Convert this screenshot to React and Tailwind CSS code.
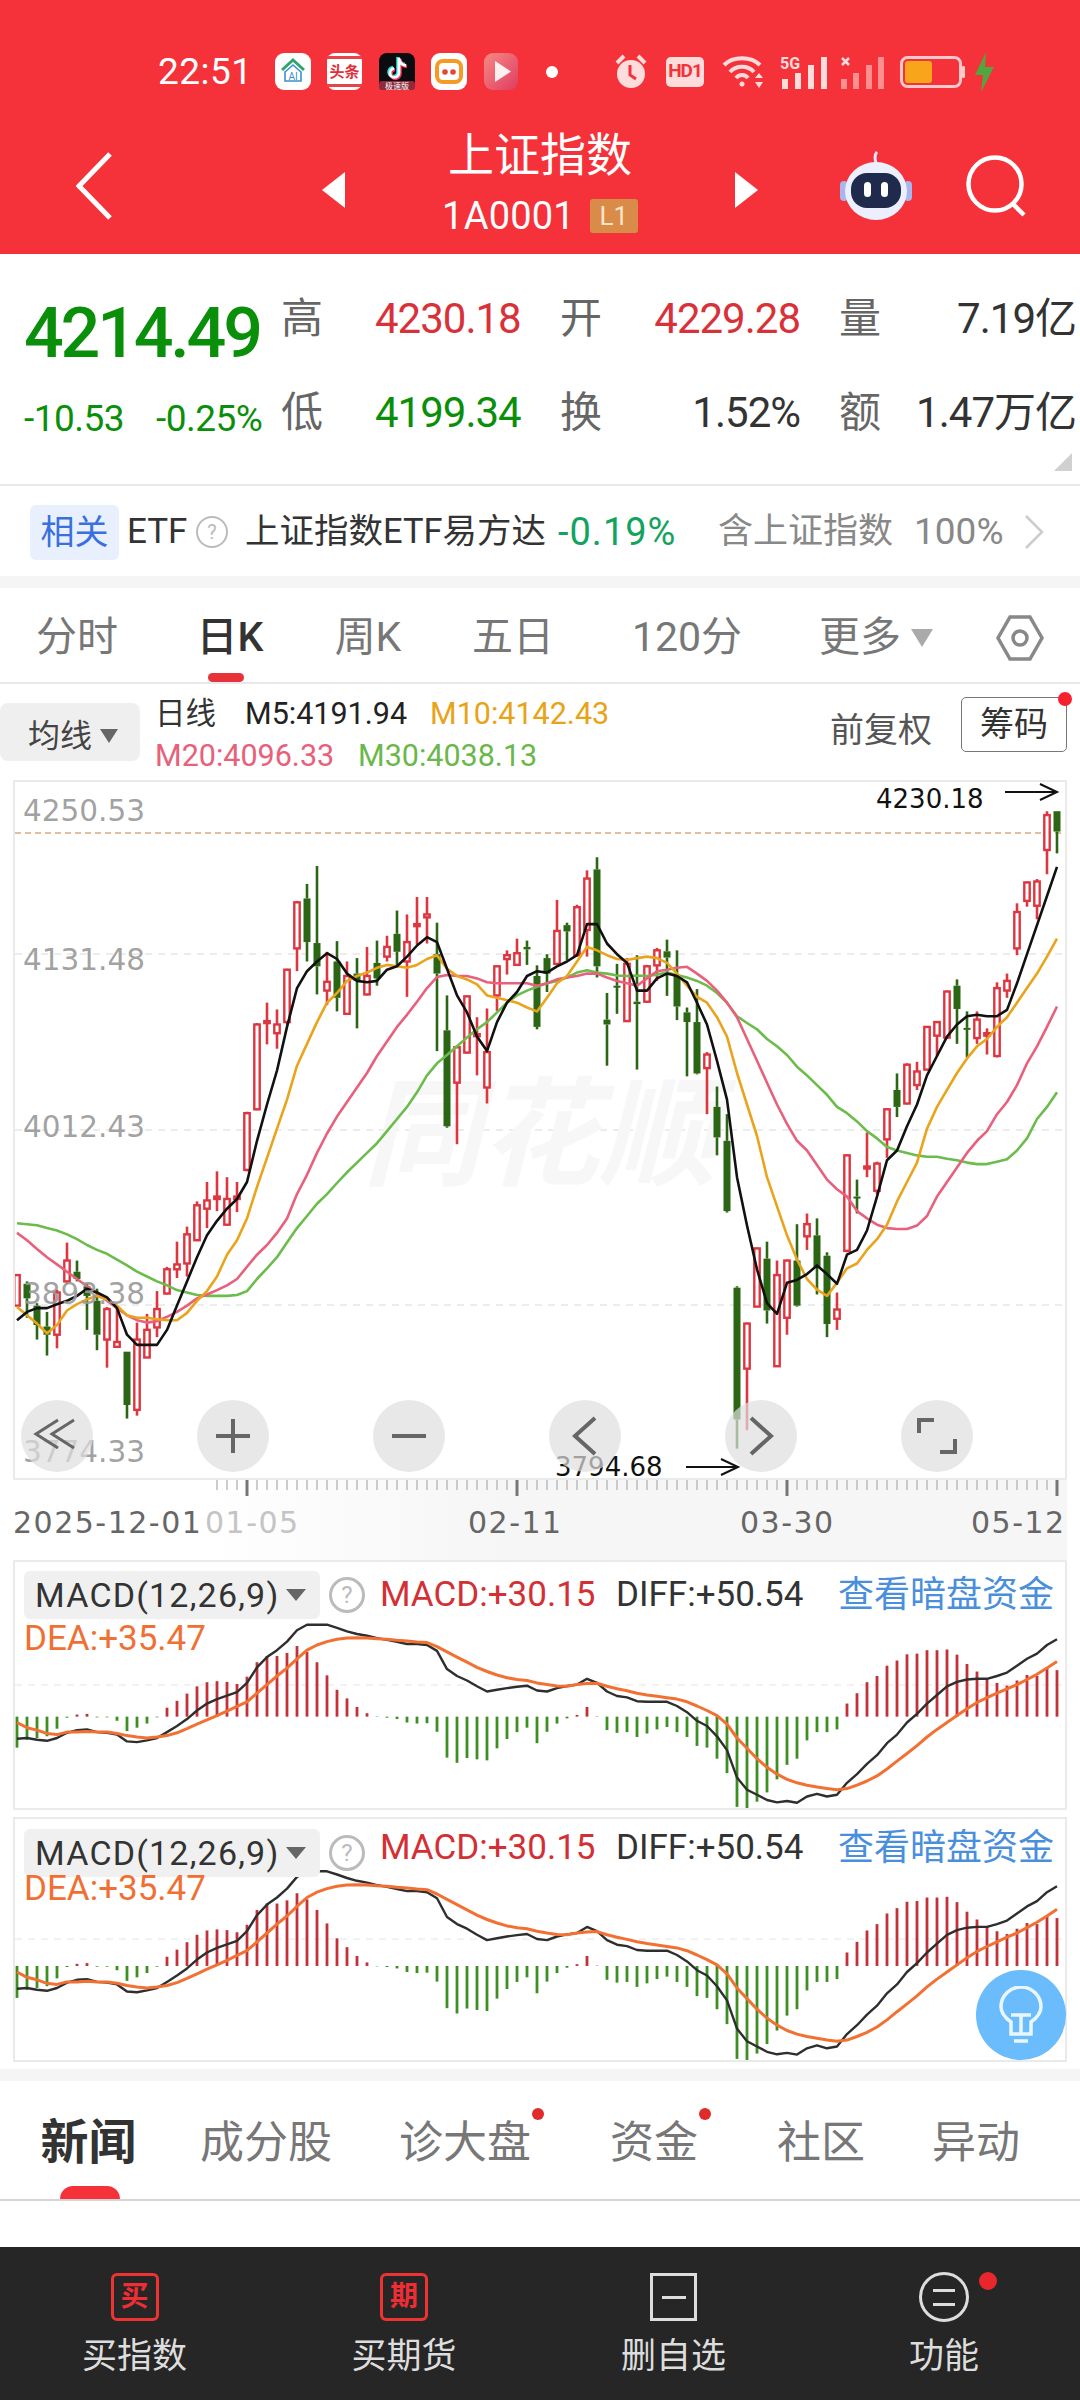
import React from "react";

// candles: [high, bodyTop, bodyBottom, low, isRed], read off the chart at 10px per bar
const candles = [
  [1042,1042,1105,1105,1],[1055,1060,1090,1130,0],[1100,1105,1145,1175,0],[1118,1148,1165,1208,0],[1072,1078,1165,1193,1],
  [975,1012,1055,1060,1],[1012,1035,1050,1055,0],[1060,1065,1085,1155,0],[1070,1095,1165,1197,0],[1108,1112,1175,1233,1],
  [1105,1180,1190,1192,1],[1200,1200,1310,1338,0],[1140,1175,1320,1332,1],[1122,1155,1212,1212,1],[1075,1112,1150,1170,1],
  [1025,1030,1080,1082,1],[973,1020,1030,1048,1],[942,958,1018,1045,1],[890,898,970,972,1],[850,888,905,945,1],
  [828,880,885,910,1],[840,885,938,940,1],[850,880,885,912,1],[705,708,825,828,1],[522,525,700,702,1],
  [480,518,522,566,1],[494,525,543,575,1],[410,412,520,525,1],[270,273,368,415,1],[235,265,355,395,0],
  [198,357,405,463,0],[375,437,455,485,1],[353,395,470,498,0],[395,425,503,505,1],[388,420,435,533,0],
  [365,425,463,465,1],[352,398,430,445,0],[342,365,385,395,1],[290,338,375,405,0],[298,355,395,468,1],
  [262,318,322,360,1],[262,298,304,358,1],[315,380,420,580,0],[465,537,735,738,0],[568,572,645,772,1],
  [465,467,583,585,1],[510,545,548,630,1],[492,582,655,688,1],[403,405,465,497,1],[372,382,390,422,1],
  [348,378,402,404,1],[352,365,370,402,0],[403,425,530,535,0],[380,388,420,458,0],[268,332,400,402,1],
  [315,320,333,392,0],[278,283,382,385,1],[207,224,330,385,1],[180,205,405,428,0],[460,515,525,610,0],
  [400,445,448,503,0],[388,400,518,520,1],[382,478,483,618,0],[402,405,478,480,1],[367,372,403,435,1],
  [350,374,387,466,0],[372,425,488,516,0],[490,500,520,632,0],[452,520,626,628,0],[582,587,615,710,1],
  [653,695,758,795,0],[710,765,910,913,0],[1065,1068,1340,1400,0],[1140,1142,1235,1362,1],[985,987,1107,1108,1],
  [973,1008,1115,1142,0],[1012,1042,1230,1230,1],[1010,1012,1130,1165,1],[937,1012,1105,1107,0],[915,937,962,990,1],
  [925,960,1025,1082,0],[995,1002,1143,1170,0],[1078,1113,1132,1155,1],[793,795,992,995,1],[845,880,883,915,0],
  [748,818,822,840,1],[808,812,868,875,1],[698,700,762,800,1],[626,660,695,716,0],[605,608,688,690,1],
  [602,622,650,660,1],[528,530,618,620,1],[518,520,548,590,1],[455,457,552,555,1],[432,445,493,565,0],
  [498,532,535,593,0],[498,515,553,565,1],[533,543,548,587,1],[438,450,590,593,1],[420,435,455,470,1],
  [275,293,368,382,1],[230,232,270,282,1],[225,230,280,308,1],[85,93,165,215,1],[85,85,127,172,0],
];

const ma5 = [1135,1118,1110,1110,1102,1095,1085,1070,1078,1088,1110,1165,1186,1186,1186,1155,1105,1055,1005,960,930,905,885,850,765,690,620,530,450,415,395,378,390,420,435,438,435,412,405,385,362,345,355,410,465,500,550,580,520,480,458,425,415,418,405,395,382,318,318,358,380,398,455,455,430,420,425,438,480,525,600,680,840,940,1030,1100,1122,1058,1052,1040,1022,1040,1060,1000,990,950,880,805,785,735,690,630,590,550,525,508,505,508,508,495,440,380,320,260,200];
const ma10 = [1108,1125,1142,1162,1145,1115,1102,1092,1085,1092,1105,1125,1130,1130,1133,1135,1135,1120,1095,1075,1045,1000,970,925,860,800,740,680,610,565,520,480,460,435,425,418,408,402,405,408,402,390,382,410,425,432,442,465,470,475,480,490,498,470,440,425,395,365,372,382,390,392,388,385,388,398,420,445,468,480,510,550,625,690,755,840,900,960,1010,1050,1072,1085,1058,1028,1018,990,968,938,890,850,810,740,695,660,625,595,570,555,530,510,480,450,420,385,348];
const ma20 = [955,970,988,1005,1020,1035,1050,1065,1080,1095,1110,1125,1135,1140,1137,1128,1118,1105,1090,1082,1073,1063,1050,1025,1000,980,955,925,875,835,790,750,715,685,655,625,590,560,530,505,478,450,427,423,425,425,430,438,440,440,440,440,445,440,432,428,425,420,420,428,435,440,445,430,415,412,408,406,420,435,455,480,510,555,600,645,690,730,765,785,815,845,865,880,910,925,938,945,947,947,940,920,880,850,820,790,765,745,710,685,650,605,570,530,488];
const ma30 = [935,937,939,945,950,958,968,980,990,998,1010,1022,1035,1045,1055,1063,1073,1078,1083,1085,1085,1085,1083,1075,1050,1028,1005,975,945,920,895,875,852,830,810,790,770,745,720,695,665,630,605,588,570,552,535,520,500,480,465,455,447,440,435,428,418,413,418,420,424,425,424,425,422,418,423,428,435,445,460,480,508,522,535,555,570,588,612,630,650,670,695,708,725,745,760,778,785,790,795,798,798,802,805,810,813,813,808,803,785,760,720,695,665];

const hist = [603,580,575,570,548,516,507,505,515,515,525,555,545,533,515,487,467,446,425,413,410,412,418,397,355,337,337,328,308,325,355,393,435,460,485,503,514,516,520,530,533,532,557,632,647,633,637,640,605,578,558,545,590,557,533,518,508,485,512,552,560,558,572,562,550,543,558,572,598,603,635,677,775,783,760,733,695,653,635,582,558,558,550,475,445,413,395,365,350,332,330,320,320,318,333,360,382,403,415,423,408,392,395,372,378];
const diff = [577,575,580,583,575,560,552,550,558,560,565,585,587,582,575,558,540,520,495,475,462,452,442,415,370,340,320,295,262,246,246,246,255,265,273,278,285,290,296,302,302,305,322,375,395,408,425,440,435,430,426,423,437,440,430,424,420,403,415,440,453,457,468,470,470,470,482,500,525,540,570,610,690,725,740,755,762,758,763,745,737,745,740,705,680,650,625,590,565,530,505,475,450,425,412,405,403,403,395,385,365,345,330,305,288];
const dea = [530,545,552,562,565,558,558,556,558,558,562,568,572,575,572,568,560,548,535,522,510,497,483,470,445,420,395,372,345,320,305,295,288,285,284,285,287,288,291,293,296,298,310,325,340,355,370,382,392,400,405,408,415,420,424,425,420,417,416,425,432,438,445,450,454,458,462,470,482,495,510,535,575,605,635,660,680,695,705,712,717,722,725,722,712,700,685,665,642,620,597,572,550,530,510,490,472,458,445,432,420,405,390,372,353];

const barX = (i) => 17 + 10 * i;
const kY = (z) => 770 + z / 2.063;
const line = (arr, toY) => arr.map((z, i) => `${barX(i)},${toY(z).toFixed(1)}`).join(" ");
const dejavu = "'DejaVu Sans', sans-serif";

function KChart() {
  return (
    <svg className="block" width="1050" height="696" viewBox="15 782 1050 696">
      {[954, 1130, 1305].map((y) => (
        <line key={y} x1="15" x2="1065" y1={y} y2={y} stroke="#e6e6e6" strokeWidth="1.5" strokeDasharray="7 6" />
      ))}
      <line x1="15" x2="1065" y1="833" y2="833" stroke="#d9a97c" strokeWidth="1.5" strokeDasharray="6 4" />
      <text x="540" y="1176" textAnchor="middle" fontSize="118" fontStyle="italic" fontWeight="700" fill="#f7f7f7" fontFamily="'Noto Sans CJK SC', sans-serif">同花顺</text>
      {candles.map(([hi, top, bot, lo, red], i) => {
        const x = barX(i);
        const color = red ? "#dd3640" : "#2b6614";
        return (
          <g key={i}>
            <line x1={x} x2={x} y1={kY(hi)} y2={kY(top)} stroke={color} strokeWidth="2.6" />
            <line x1={x} x2={x} y1={kY(bot)} y2={kY(lo)} stroke={color} strokeWidth="2.6" />
            {red ? (
              <rect x={x - 2.7} y={kY(top)} width="5.4" height={Math.max(kY(bot) - kY(top), 2)} fill="#fff" stroke={color} strokeWidth="2.4" />
            ) : (
              <rect x={x - 3.5} y={kY(top)} width="7" height={Math.max(kY(bot) - kY(top), 2)} fill={color} />
            )}
          </g>
        );
      })}
      <polyline points={line(ma30, kY)} fill="none" stroke="#6cbc4c" strokeWidth="2.6" strokeLinejoin="round" />
      <polyline points={line(ma20, kY)} fill="none" stroke="#e9607c" strokeWidth="2.6" strokeLinejoin="round" />
      <polyline points={line(ma10, kY)} fill="none" stroke="#e9a41c" strokeWidth="2.6" strokeLinejoin="round" />
      <polyline points={line(ma5, kY)} fill="none" stroke="#111" strokeWidth="2.6" strokeLinejoin="round" />
      <g fontFamily={dejavu} fontSize="29.5" fill="#999" fillOpacity="0.92">
        <text x="23" y="821">4250.53</text>
        <text x="23" y="970">4131.48</text>
        <text x="23" y="1137">4012.43</text>
        <text x="23" y="1304">3893.38</text>
        <text x="23" y="1462">3774.33</text>
      </g>
      <g fontFamily={dejavu} fontSize="26" fill="#111">
        <text x="876" y="808">4230.18</text>
        <text x="555" y="1476">3794.68</text>
      </g>
      <g fill="none" stroke="#111" strokeWidth="2">
        <path d="M1005 792H1057M1040 784L1057 792L1040 800" />
        <path d="M686 1467H738M721 1459L738 1467L721 1475" />
      </g>
    </svg>
  );
}

function ChartButton({ children }) {
  return (
    <div className="w-[72px] h-[72px] rounded-full bg-[#dedede]/70 shrink-0">
      <svg width="72" height="72" viewBox="0 0 72 72" fill="none" stroke="#666" strokeWidth="4">
        {children}
      </svg>
    </div>
  );
}

function Axis() {
  const ticks = [];
  for (let x = 217; x <= 1057; x += 10) {
    const major = (x - 247) % 270 === 0;
    ticks.push(
      <line key={x} x1={x} x2={x} y1="1480" y2={major ? 1496 : 1490} stroke={major ? "#777" : "#bbb"} strokeWidth={major ? 3 : 1.5} />
    );
  }
  return (
    <svg className="block" width="1080" height="80" viewBox="0 1480 1080 80">
      <defs>
        <linearGradient id="axisfade" x1="0" x2="1" y1="0" y2="0">
          <stop offset="0" stopColor="#f6f6f6" stopOpacity="0" />
          <stop offset="1" stopColor="#f6f6f6" />
        </linearGradient>
      </defs>
      <rect x="200" y="1480" width="300" height="80" fill="url(#axisfade)" />
      <rect x="500" y="1480" width="567" height="80" fill="#f6f6f6" />
      {ticks}
      <g fontFamily={dejavu} fontSize="30" letterSpacing="1.5" fill="#666">
        <text x="205" y="1533" fill="#c4c4c4">01-05</text>
        <text x="13" y="1533">2025-12-01</text>
        <text x="468" y="1533">02-11</text>
        <text x="740" y="1533">03-30</text>
        <text x="971" y="1533">05-12</text>
      </g>
    </svg>
  );
}

function MacdPlot({ scale, zero, grid, width, height, top }) {
  const y = (z) => 1540 + (zero + (z - 513) * scale) / 2.904;
  const base = 1540 + zero / 2.904;
  return (
    <svg className="block" width={width} height={height} viewBox={`15 ${top} ${width} ${height}`}>
      <line x1="15" x2="1065" y1={grid} y2={grid} stroke="#eee" strokeWidth="1.5" strokeDasharray="7 6" />
      {hist.map((z, i) => (
        <line key={i} x1={barX(i)} x2={barX(i)} y1={base} y2={y(z)} stroke={z < 513 ? "#c43038" : "#3d8f22"} strokeWidth="2.8" />
      ))}
      <polyline points={line(diff, y)} fill="none" stroke="#2e2e2e" strokeWidth="2.4" strokeLinejoin="round" />
      <polyline points={line(dea, y)} fill="none" stroke="#f27132" strokeWidth="3" strokeLinejoin="round" />
    </svg>
  );
}

function MacdHeader({ topGap, deaGap, lift }) {
  return (
    <div className="absolute left-0 top-0 w-full" style={{ paddingTop: topGap }}>
      <div className="flex items-center h-[48px] pl-[9px] text-[35px]">
        <div className="w-[296px] h-[48px] flex items-center pl-[11px] bg-[#f0f0f0] rounded-md text-[#333] text-[34px]">
          <span className="w-[245px] tracking-[1.2px]">MACD(12,26,9)</span>
          <span className="ml-[6px] w-0 h-0 border-x-[10px] border-x-transparent border-t-[12px] border-t-[#666]" />
        </div>
        <span className="ml-[9px] w-[36px] h-[36px] rounded-full border-[3px] border-[#bbb] text-[#bbb] text-[24px] leading-[30px] text-center">?</span>
        <div className="flex items-center" style={{ marginTop: lift }}>
          <span className="ml-[15px] text-[#d42f35] w-[236px]">MACD:+30.15</span>
          <span className="text-[#333] w-[222px]">DIFF:+50.54</span>
          <span className="text-[#4a8fdc] text-[36px]">查看暗盘资金</span>
        </div>
      </div>
      <div className="pl-[9px] text-[35px] leading-[40px] text-[#f07033]" style={{ marginTop: deaGap }}>DEA:+35.47</div>
    </div>
  );
}

const quoteRows = [
  ["高", "4230.18", "text-[#d9313a]", "开", "4229.28", "text-[#d9313a]", "量", "7.19亿"],
  ["低", "4199.34", "text-[#0a8f0a]", "换", "1.52%", "text-[#333]", "额", "1.47万亿"],
];

function StatusBar() {
  return (
    <div className="flex items-center h-[37px] mt-[53px] pl-[158px]">
      <span className="w-[117px] text-[37px] leading-none text-white tracking-[0.5px]">22:51</span>
      <svg width="36" height="37" viewBox="0 0 36 37">
        <rect width="36" height="37" rx="9" fill="#fff" />
        <path d="M7 17L18 7L29 17" fill="none" stroke="#2fa56b" strokeWidth="3" />
        <path d="M10 19L18 12L26 19V28H10Z" fill="none" stroke="#3b8fd0" strokeWidth="1.6" />
        <text x="18" y="27" textAnchor="middle" fontSize="10" fill="#3b8fd0" fontFamily="Roboto">AI</text>
      </svg>
      <svg className="ml-[16px]" width="35" height="37" viewBox="0 0 35 37">
        <rect width="35" height="37" rx="8" fill="#fff" />
        <rect width="35" height="3" y="3" fill="#e8434a" />
        <rect width="35" height="3" y="31" fill="#e8434a" />
        <text x="17.5" y="24" textAnchor="middle" fontSize="15" fontWeight="700" fill="#e0303a" fontFamily="'Noto Sans CJK SC'">头条</text>
      </svg>
      <svg className="ml-[17px]" width="36" height="37" viewBox="0 0 36 37">
        <rect width="36" height="37" rx="8" fill="#0b0b10" />
        <path d="M20 5V20A4.5 4.5 0 1 1 15 15.5M20 6C21 10 23 12 27 12.500" fill="none" stroke="#2ee6e6" strokeWidth="3.500" transform="translate(-1 -1)" />
        <path d="M20 5V20A4.5 4.5 0 1 1 15 15.5M20 6C21 10 23 12 27 12.500" fill="none" stroke="#f4355a" strokeWidth="3.500" transform="translate(1 1)" />
        <path d="M20 5V20A4.5 4.5 0 1 1 15 15.5M20 6C21 10 23 12 27 12.500" fill="none" stroke="#fff" strokeWidth="2.800" />
        <rect y="28" width="36" height="9" rx="3" fill="#8e2a3c" />
        <text x="18" y="36" textAnchor="middle" fontSize="8" fill="#fff" fontFamily="'Noto Sans CJK SC'">极速版</text>
      </svg>
      <svg className="ml-[16px]" width="36" height="37" viewBox="0 0 36 37">
        <rect width="36" height="37" rx="9" fill="#fff" />
        <rect x="6" y="8" width="24" height="21" rx="6" fill="none" stroke="#f59a23" strokeWidth="4" />
        <circle cx="14" cy="19" r="2.800" fill="#e0483a" />
        <circle cx="22" cy="19" r="2.800" fill="#e0483a" />
      </svg>
      <svg className="ml-[17px]" width="34" height="37" viewBox="0 0 34 37">
        <defs>
          <linearGradient id="playbg" x1="0" x2="1" y1="0" y2="1">
            <stop offset="0" stopColor="#f58a82" />
            <stop offset="1" stopColor="#e13b62" />
          </linearGradient>
        </defs>
        <rect width="34" height="37" rx="9" fill="url(#playbg)" />
        <path d="M11 8L27 18.500L11 29Z" fill="#fff" fillOpacity="0.9" />
      </svg>
      <span className="ml-[28px] w-[12px] h-[12px] rounded-full bg-white" />
      <svg className="ml-[57px]" width="32" height="37" viewBox="0 0 32 37">
        <circle cx="16" cy="21" r="14" fill="#ffdcdc" />
        <path d="M2 10L9 3M30 10L23 3" stroke="#ffdcdc" strokeWidth="4" />
        <path d="M15 12V22L21 26" fill="none" stroke="#f53239" strokeWidth="3" />
      </svg>
      <div className="ml-[19px] w-[38px] h-[30px] rounded-[5px] bg-[#ffdcdc] flex items-center justify-center text-[#f53239] text-[19px] font-bold tracking-[-1px]">HD1</div>
      <svg className="ml-[18px]" width="43" height="33" viewBox="0 0 43 33" fill="none" stroke="#ffdcdc" strokeWidth="4">
        <path d="M2 10C11 1 29 1 38 10" />
        <path d="M8 17C14 10 26 10 32 17" />
        <path d="M14 23C17 19 23 19 26 23" />
        <circle cx="20" cy="29" r="2.500" fill="#ffdcdc" stroke="none" />
        <path d="M37 18L41 23H33ZM37 33L41 27H33Z" fill="#ffdcdc" stroke="none" />
      </svg>
      <svg className="ml-[15px]" width="48" height="34" viewBox="0 0 48 34">
        <text x="0" y="14" fontSize="16" fontWeight="700" fill="#ffdcdc" fontFamily="Roboto">5G</text>
        <rect x="2" y="24" width="6" height="10" fill="#ffdcdc" />
        <rect x="15" y="18" width="6" height="16" fill="#ffdcdc" />
        <rect x="28" y="10" width="6" height="24" fill="#ffdcdc" />
        <rect x="41" y="2" width="6" height="32" fill="#ffdcdc" />
      </svg>
      <svg className="ml-[12px]" width="45" height="34" viewBox="0 0 45 34">
        <path d="M2 3L9 10M9 3L2 10" stroke="#ffdcdc" strokeWidth="2.500" />
        <rect x="1" y="24" width="6" height="10" fill="#ff8f8f" />
        <rect x="13" y="18" width="6" height="16" fill="#ff8f8f" />
        <rect x="26" y="10" width="6" height="24" fill="#ff8f8f" />
        <rect x="38" y="2" width="6" height="32" fill="#ff8f8f" />
      </svg>
      <svg className="ml-[15px]" width="66" height="32" viewBox="0 0 66 32">
        <rect x="1.500" y="1.500" width="59" height="29" rx="6" fill="none" stroke="#ffc9c9" strokeWidth="3" />
        <rect x="5" y="5" width="27" height="22" rx="3" fill="#f9a51c" />
        <rect x="62" y="10" width="3" height="12" rx="1" fill="#ffc9c9" />
      </svg>
      <svg className="ml-[8px]" width="21" height="40" viewBox="0 0 21 40">
        <path d="M12 0L1 23H9L7 40L20 15H11Z" fill="#52a63f" />
      </svg>
    </div>
  );
}

function NavBar() {
  return (
    <div className="flex items-center mt-[39px] h-[113px]">
      <svg className="ml-[76px] shrink-0" width="36" height="68" viewBox="0 0 36 68" fill="none" stroke="#fff" strokeWidth="5">
        <path d="M34 2L3 34L34 66" />
      </svg>
      <svg className="ml-[210px] shrink-0 mt-[8px]" width="23" height="36" viewBox="0 0 23 36">
        <path d="M23 0V36L0 18Z" fill="#fff" />
      </svg>
      <div className="w-[390px] flex flex-col items-center text-white pb-[5px]">
        <div className="text-[46px] leading-[50px]">上证指数</div>
        <div className="flex items-center mt-[16px] h-[40px]">
          <span className="text-[38px] leading-none tracking-[0.2px]">1A0001</span>
          <span className="ml-[15px] w-[48px] h-[34px] bg-[#d98c47] rounded-[3px] text-[26px] leading-[34px] text-center text-[#f8e4cd]">L1</span>
        </div>
      </div>
      <svg className="shrink-0 mt-[8px]" width="23" height="36" viewBox="0 0 23 36">
        <path d="M0 0V36L23 18Z" fill="#fff" />
      </svg>
      <svg className="ml-[82px] shrink-0" width="72" height="70" viewBox="0 0 72 70">
        <path d="M36 14C36 9 33 5 37 1" fill="none" stroke="#dfe3fb" strokeWidth="3" />
        <rect x="0" y="30" width="8" height="20" rx="4" fill="#a9b5ec" />
        <rect x="64" y="30" width="8" height="20" rx="4" fill="#a9b5ec" />
        <ellipse cx="36" cy="40" rx="31" ry="29" fill="#eceffd" />
        <rect x="11" y="22" width="50" height="35" rx="16" fill="#1f2a4d" />
        <rect x="24" y="31" width="7" height="15" rx="3.500" fill="#fff" />
        <rect x="41" y="31" width="7" height="15" rx="3.500" fill="#fff" />
      </svg>
      <svg className="ml-[54px] shrink-0" width="62" height="62" viewBox="0 0 62 62" fill="none" stroke="#fff" strokeWidth="4.500">
        <circle cx="29" cy="29" r="26.500" />
        <path d="M46 48L58 60" />
      </svg>
    </div>
  );
}

function Tab({ label, width, active, children }) {
  return (
    <div className={`relative h-full flex items-center justify-center pt-[5px] text-[41px] ${width} ${active ? "text-[#333] font-medium" : "text-[#777]"}`}>
      {label}
      {children}
    </div>
  );
}

function BottomTab({ label, width, active, dot }) {
  return (
    <div className={`relative h-full flex items-center justify-center pt-[6px] shrink-0 ${width} ${active ? "text-[48px] text-[#333] font-bold" : "text-[44px] text-[#777]"}`}>
      <span className="relative">
        {label}
        {dot ? <span className="absolute top-[-2px] right-[-13px] w-[12px] h-[12px] rounded-full bg-[#e02b2b]" /> : null}
      </span>
      {active ? <span className="absolute bottom-0 left-[60px] w-[60px] h-[13px] rounded-t-full bg-[#f53239]" /> : null}
    </div>
  );
}

function BarItem({ label, width, children }) {
  return (
    <div className={`relative flex flex-col items-center h-full pt-[25px] text-[35px] text-[#ddd] ${width}`}>
      <div className="h-[50px] flex items-center justify-center">{children}</div>
      <div className="mt-[13px] leading-[44px]">{label}</div>
    </div>
  );
}

export default function App() {
  return (
    <div className="w-[1080px] h-[2400px] bg-white overflow-hidden font-['Roboto','Noto_Sans_CJK_SC',sans-serif]">
      <div className="h-[254px] bg-[#f53239] overflow-hidden">
        <StatusBar />
        <NavBar />
      </div>

      {/* quote */}
      <div className="relative h-[232px] border-b-2 border-[#e9e9e9] flex pt-[17px]">
        <div className="w-[281px] pl-[24px]">
          <div className="mt-[26px] h-[72px] text-[70px] leading-[72px] font-medium text-[#0a8f0a] tracking-[-3.2px]">4214.49</div>
          <div className="mt-[30px] h-[40px] flex text-[37px] leading-[40px] text-[#0a8f0a] tracking-[-0.5px]">
            <span className="w-[132px]">-10.53</span>
            <span>-0.25%</span>
          </div>
        </div>
        <div className="grid grid-cols-[94px_146px_39px_42px_198px_39px_42px_195px] grid-rows-[94px_94px] items-center">
          {quoteRows.map((r) => (
            <React.Fragment key={r[0]}>
              <span className="text-[42px] text-[#666]">{r[0]}</span>
              <span className={`text-[42px] tracking-[-1px] ${r[2]}`}>{r[1]}</span>
              <span />
              <span className="text-[42px] text-[#666]">{r[3]}</span>
              <span className={`text-[42px] tracking-[-1px] text-right ${r[5]}`}>{r[4]}</span>
              <span />
              <span className="text-[42px] text-[#666]">{r[6]}</span>
              <span className="text-[42px] tracking-[-1px] text-right text-[#333] whitespace-nowrap">{r[7]}</span>
            </React.Fragment>
          ))}
        </div>
        <span className="absolute right-[8px] bottom-[13px] w-0 h-0 border-l-[18px] border-l-transparent border-b-[18px] border-b-[#d0d0d0]" />
      </div>

      {/* related ETF */}
      <div className="h-[90px] flex items-center pl-[30px] whitespace-nowrap pt-[2px]">
        <span className="w-[89px] h-[55px] bg-[#e8f0fd] rounded-md text-[#3b6fe0] text-[34px] leading-[55px] text-center">相关</span>
        <span className="ml-[8px] text-[35px] text-[#333] w-[69px]">ETF</span>
        <span className="w-[32px] h-[32px] rounded-full border-2 border-[#bbb] text-[#bbb] text-[20px] leading-[28px] text-center">?</span>
        <span className="ml-[17px] text-[34.5px] text-[#333] w-[313px]">上证指数ETF易方达</span>
        <span className="text-[38px] tracking-[1px] text-[#12a35f] w-[160px]">-0.19%</span>
        <span className="text-[35px] text-[#888] w-[196px]">含上证指数</span>
        <span className="text-[37px] text-[#888] w-[110px]">100%</span>
        <svg width="20" height="36" viewBox="0 0 20 36" fill="none" stroke="#ccc" strokeWidth="2.500">
          <path d="M2 2L18 18L2 34" />
        </svg>
      </div>
      <div className="h-[12px] bg-[#f5f5f5]" />

      {/* period tabs */}
      <div className="flex h-[96px] border-b-2 border-[#e9e9e9]">
        <Tab label="分时" width="w-[154px]" />
        <Tab label="日K" width="w-[152px]" active>
          <span className="absolute bottom-0 left-[54px] w-[36px] h-[9px] rounded-full bg-[#e8323a]" />
        </Tab>
        <Tab label="周K" width="w-[124px]" />
        <Tab label="五日" width="w-[166px]" />
        <Tab label="120分" width="w-[182px]" />
        <Tab label="更多" width="w-[196px]">
          <span className="ml-[10px] w-0 h-0 border-x-[11px] border-x-transparent border-t-[18px] border-t-[#aaa]" />
        </Tab>
        <div className="w-[92px] flex items-center justify-center pt-[5px]">
          <svg width="48" height="46" viewBox="0 0 48 46" fill="none" stroke="#888" strokeWidth="3.500">
            <path d="M14 2H34L46 23L34 44H14L2 23Z" />
            <circle cx="24" cy="23" r="7" />
          </svg>
        </div>
      </div>

      {/* moving average legend */}
      <div className="relative h-[94px] flex whitespace-nowrap">
        <div className="mt-[19px] w-[140px] h-[58px] bg-[#efefef] rounded-lg flex items-center pl-[28px] pt-[8px] text-[32px] text-[#444]">
          均线
          <span className="ml-[8px] w-0 h-0 border-x-[9px] border-x-transparent border-t-[14px] border-t-[#666]" />
        </div>
        <div className="ml-[15px] pt-[9px] text-[30.5px] leading-[42px]">
          <div className="flex">
            <span className="w-[90px] text-[#333]">日线</span>
            <span className="w-[185px] text-[#222]">M5:4191.94</span>
            <span className="text-[#e8a317]">M10:4142.43</span>
          </div>
          <div className="flex">
            <span className="w-[203px] text-[#e8607a]">M20:4096.33</span>
            <span className="text-[#6ab84b]">M30:4038.13</span>
          </div>
        </div>
        <span className="absolute left-[830px] top-[21px] text-[34px] text-[#555]">前复权</span>
        <div className="absolute left-[961px] top-[13px] w-[106px] h-[55px] border border-[#777] rounded-[5px] text-[34px] leading-[53px] text-center text-[#333]">
          筹码
          <span className="absolute right-[-6px] top-[-6px] w-[14px] h-[14px] rounded-full bg-[#f5222d]" />
        </div>
      </div>

      {/* candle chart */}
      <div className="relative mt-[2px] ml-[13px] w-[1054px] h-[700px] border-2 border-[#eaeaea]">
        <KChart />
        <div className="absolute left-[6px] top-[618px] flex gap-[104px]">
          <ChartButton><path d="M37 20L15 34L37 48M53 20L31 34L53 48" strokeWidth="3" /></ChartButton>
          <ChartButton><path d="M19 36H53M36 19V53" /></ChartButton>
          <ChartButton><path d="M19 36H53" /></ChartButton>
          <ChartButton><path d="M46 18L26 36L46 54" /></ChartButton>
          <ChartButton><path d="M26 18L46 36L26 54" /></ChartButton>
          <ChartButton><path d="M18 33V20H33M54 39V52H39" /></ChartButton>
        </div>
      </div>
      <Axis />

      {/* indicators */}
      <div className="relative ml-[13px] w-[1054px] h-[250px] border-2 border-[#eaeaea]">
        <MacdPlot scale={1} zero={513} grid={1685} width={1050} height={246} top={1562} />
        <MacdHeader topGap={9} deaGap={0} lift={0} />
      </div>
      <div className="relative mt-[7px] ml-[13px] w-[1054px] h-[245px] border-2 border-[#eaeaea]">
        <MacdPlot scale={1.03} zero={1237} grid={1939} width={1050} height={241} top={1819} />
        <MacdHeader topGap={10} deaGap={-8} lift={-10} />
        <div className="absolute right-[-1px] top-[151px] w-[90px] h-[90px] rounded-full bg-[#6bbcfc] flex items-center justify-center">
          <svg width="44" height="58" viewBox="0 0 44 58" fill="none" stroke="#eaf6ff" strokeWidth="3.500">
            <path d="M12 36C5 31 2 26 2 21A20 20 0 0 1 42 21C42 26 39 31 32 36V48H12Z" />
            <path d="M12 29H32M22 29V48M15 55H29" />
          </svg>
        </div>
      </div>
      <div className="mt-[7px] h-[12px] bg-[#f5f5f5]" />

      {/* news tabs */}
      <div className="flex h-[120px] border-b-2 border-[#d4d4d4] whitespace-nowrap">
        <BottomTab label="新闻" width="w-[177px]" active />
        <BottomTab label="成分股" width="w-[178px]" />
        <BottomTab label="诊大盘" width="w-[220px]" dot />
        <BottomTab label="资金" width="w-[158px]" dot />
        <BottomTab label="社区" width="w-[176px]" />
        <BottomTab label="异动" width="w-[134px]" />
      </div>
      <div className="h-[46px]" />

      {/* action bar */}
      <div className="flex h-[153px] bg-[#262626]">
        <BarItem label="买指数" width="w-[269px]">
          <div className="w-[48px] h-[48px] border-[3px] border-[#e33] rounded-md text-[#ee2d35] text-[28px] font-bold leading-[42px] text-center">买</div>
        </BarItem>
        <BarItem label="买期货" width="w-[270px]">
          <div className="w-[48px] h-[48px] border-[3px] border-[#e33] rounded-md text-[#ee2d35] text-[28px] font-bold leading-[42px] text-center">期</div>
        </BarItem>
        <BarItem label="删自选" width="w-[269px]">
          <div className="w-[47px] h-[48px] border-[3px] border-[#ddd] flex items-center justify-center">
            <span className="w-[24px] h-[3px] bg-[#ddd]" />
          </div>
        </BarItem>
        <BarItem label="功能" width="w-[272px]">
          <div className="relative w-[50px] h-[50px] rounded-full border-[3px] border-[#ddd] flex flex-col items-center justify-center gap-[11px]">
            <span className="w-[22px] h-[3px] bg-[#ddd]" />
            <span className="w-[22px] h-[3px] bg-[#ddd]" />
            <span className="absolute right-[-31px] top-[-3px] w-[18px] h-[18px] rounded-full bg-[#e8262c]" />
          </div>
        </BarItem>
      </div>
    </div>
  );
}
